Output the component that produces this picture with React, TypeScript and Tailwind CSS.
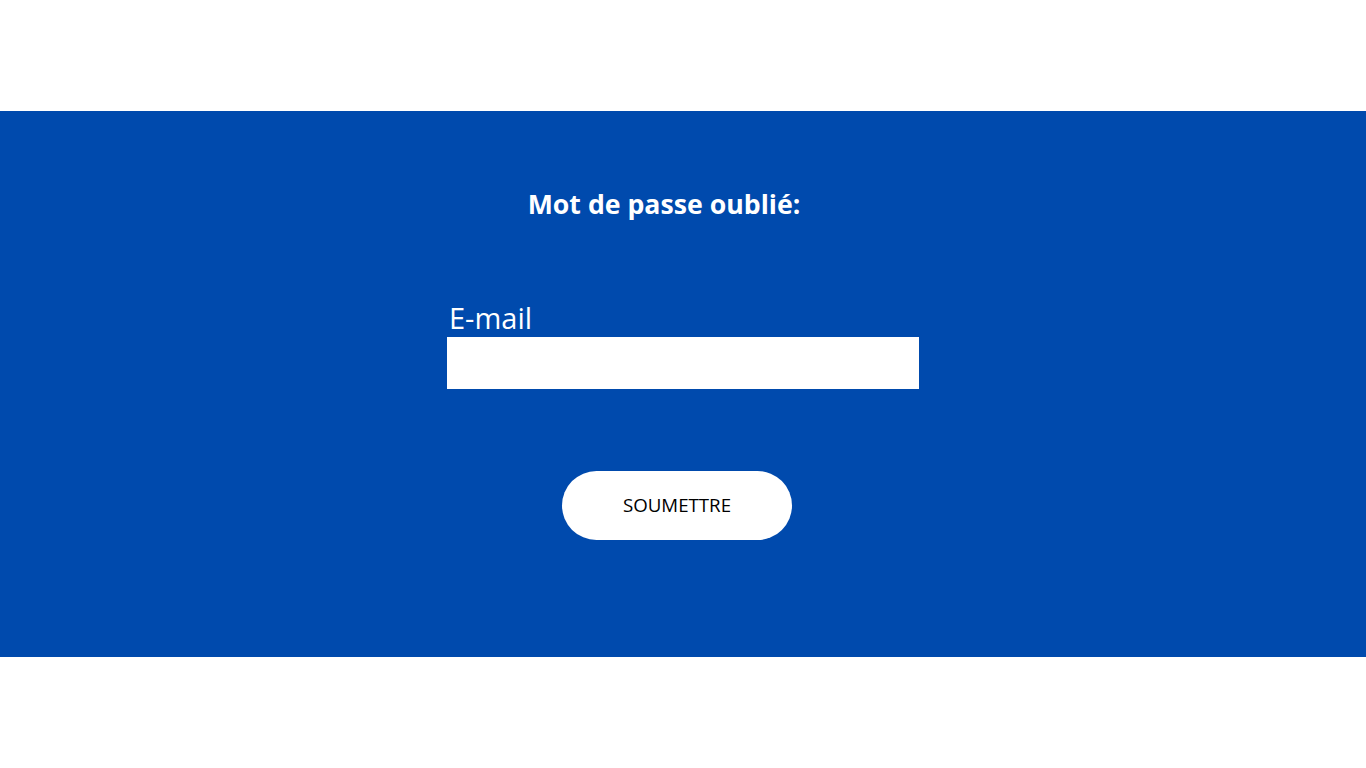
export default function App() {
  return (
    <div className="min-h-screen bg-white pt-[111px] pb-[111px] font-['Open_Sans',sans-serif]">
      <div className="h-[546px] bg-[#004aad]">
        <div className="mx-auto w-[472px] pt-[75px]">
          <h1 className="pr-[38px] text-center text-[26.7px] font-bold leading-[36px] text-white">
            Mot de passe oublié:
          </h1>
          <label className="mt-[76px] block pl-[2px] text-[29px] leading-[39px] text-white">
            E-mail
          </label>
          <input type="email" className="block h-[52px] w-[472px] bg-white outline-none" />
          <div className="mt-[82px] flex justify-center pr-[12px]">
            <button className="h-[69px] w-[230px] rounded-full bg-white text-[18.7px] text-black">
              SOUMETTRE
            </button>
          </div>
        </div>
      </div>
    </div>
  );
}
